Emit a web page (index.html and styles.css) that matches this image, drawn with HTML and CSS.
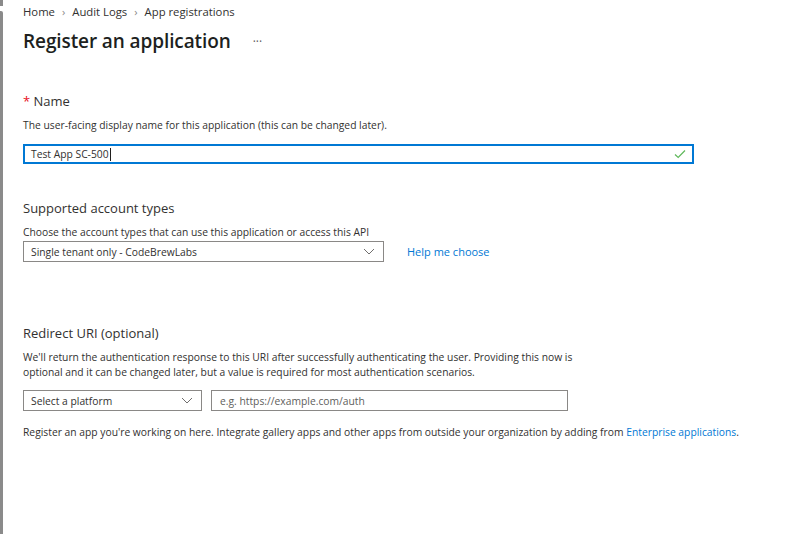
FILE: index.html
```html
<!DOCTYPE html>
<html lang="en">
  <head>
    <meta charset="UTF-8" />
    <title>Register an application</title>
    <link rel="stylesheet" href="styles.css">
  </head>
  <body>
    <div class="frame">
      <div class="edge">
        <div class="edge-top"></div>
        <div class="edge-bar"></div>
      </div>
      <div class="page">
        <div class="breadcrumb">
          <span>Home</span>
          <span class="sep">&rsaquo;</span>
          <span>Audit Logs</span>
          <span class="sep">&rsaquo;</span>
          <span>App registrations</span>
        </div>
        <div class="title-row">
          <h1>Register an application</h1>
          <span class="more">&middot;&middot;&middot;</span>
        </div>

        <div class="section name-section">
          <h2><span class="required">*</span> Name</h2>
          <p class="desc">The user-facing display name for this application (this can be changed later).</p>
          <div class="text-input focused">
            <span class="value">Test App SC-500</span><span class="caret"></span>
            <svg class="check" width="12" height="10" viewBox="0 0 12 10">
              <path d="M1 5.5 L4.2 8.5 L11 1.5" fill="none" stroke="#5fb85b" stroke-width="1.2" />
            </svg>
          </div>
        </div>

        <div class="section account-section">
          <h2>Supported account types</h2>
          <p class="desc">Choose the account types that can use this application or access this API</p>
          <div class="select-row">
            <div class="dropdown account-dropdown">
              <span>Single tenant only - CodeBrewLabs</span>
              <svg class="chev" width="12" height="7" viewBox="0 0 12 7">
                <path d="M1 1 L6 6 L11 1" fill="none" stroke="#605e5c" stroke-width="0.9" />
              </svg>
            </div>
            <a class="link help-link">Help me choose</a>
          </div>
        </div>

        <div class="section redirect-section">
          <h2>Redirect URI (optional)</h2>
          <p class="desc">We'll return the authentication response to this URI after successfully authenticating the user. Providing this now is<br>optional and it can be changed later, but a value is required for most authentication scenarios.</p>
          <div class="select-row">
            <div class="dropdown platform-dropdown">
              <span>Select a platform</span>
              <svg class="chev" width="12" height="7" viewBox="0 0 12 7">
                <path d="M1 1 L6 6 L11 1" fill="none" stroke="#605e5c" stroke-width="0.9" />
              </svg>
            </div>
            <div class="text-input uri-input">
              <span class="placeholder">e.g. https://example.com/auth</span>
            </div>
          </div>
          <p class="note">Register an app you're working on here. Integrate gallery apps and other apps from outside your organization by adding from <a class="link">Enterprise applications</a>.</p>
        </div>
      </div>
    </div>
  </body>
</html>
```

FILE: styles.css
```css
body {
  margin: 0;
  padding: 0;
  width: 800px;
  height: 534px;
  overflow: hidden;
  background-color: #ffffff;
  font-family: 'Open Sans', sans-serif;
  color: #323130;
}

.frame {
  display: flex;
  height: 534px;
}

.edge {
  width: 3px;
  display: flex;
  flex-direction: column;
}

.edge-top {
  height: 6px;
  background-color: #8a8a8a;
  margin-bottom: 5px;
}

.edge-bar {
  flex: 1;
  background-color: #8a8a8a;
  border-top-right-radius: 2px;
}

.page {
  flex: 1;
  padding: 4px 0 0 20px;
}

.breadcrumb {
  display: flex;
  align-items: center;
  gap: 6px;
  font-size: 11.3px;
  line-height: 16px;
  color: #323130;
}

.breadcrumb .sep {
  color: #8a8886;
  font-size: 11px;
  margin: 0 1px;
}

.title-row {
  display: flex;
  align-items: center;
  margin-top: 8px;
  height: 26px;
}

h1 {
  margin: 0;
  font-size: 19px;
  font-weight: 600;
  color: #201f1e;
  letter-spacing: -0.1px;
}

.more {
  margin-left: 22px;
  font-size: 12px;
  color: #605e5c;
}

.section h2 {
  margin: 0;
  font-size: 13px;
  font-weight: 400;
  line-height: 18px;
  color: #323130;
}

.required {
  color: #e81123;
}

.desc {
  margin: 8px 0 0;
  font-size: 10.3px;
  line-height: 15px;
  color: #323130;
}

.name-section {
  margin-top: 38px;
}

.text-input {
  box-sizing: border-box;
  display: flex;
  align-items: center;
  border: 1px solid #8a8886;
  height: 20px;
  padding: 0 8px;
  font-size: 10.3px;
}

.text-input.focused {
  margin-top: 11px;
  width: 671px;
  height: 20px;
  border: 2px solid #0078d4;
  padding: 0 6px;
}

.caret {
  width: 1px;
  height: 13px;
  background-color: #201f1e;
  margin-left: 1px;
}

.check {
  margin-left: auto;
}

.account-section {
  margin-top: 35px;
}

.select-row {
  display: flex;
  align-items: center;
  margin-top: 1px;
}

.dropdown {
  box-sizing: border-box;
  display: flex;
  align-items: center;
  justify-content: space-between;
  height: 21px;
  border: 1px solid #8a8886;
  padding: 0 8px 0 7px;
  font-size: 10.3px;
}

.account-dropdown {
  width: 361px;
}

.link {
  color: #0078d4;
  text-decoration: none;
}

.help-link {
  margin-left: 23px;
  font-size: 11px;
}

.redirect-section {
  margin-top: 62px;
}

.redirect-section .select-row {
  margin-top: 10px;
}

.platform-dropdown {
  width: 179px;
}

.uri-input {
  width: 357px;
  height: 21px;
  margin-left: 9px;
}

.placeholder {
  color: #605e5c;
}

.note {
  margin: 14px 0 0;
  font-size: 10.3px;
  line-height: 15px;
}
```
